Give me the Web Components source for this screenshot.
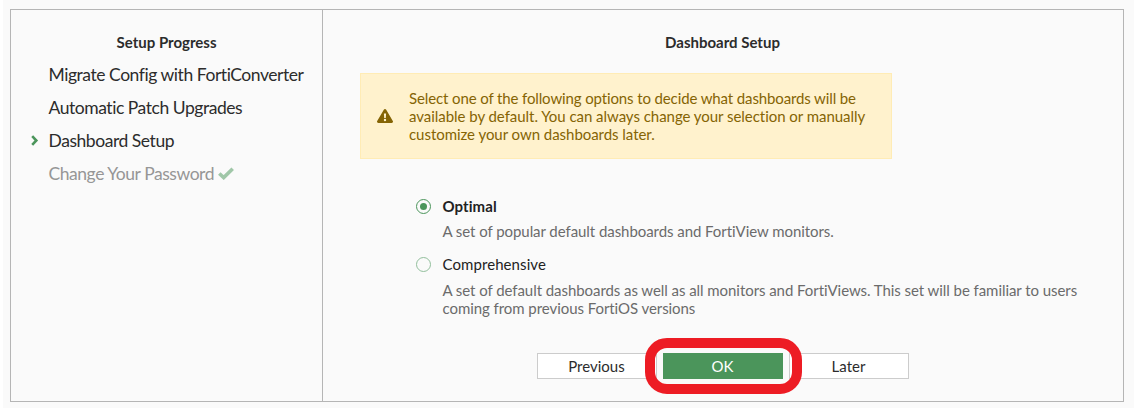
<!DOCTYPE html>
<html lang="en">
<head>
<meta charset="utf-8">
<title>Dashboard Setup</title>
<style>
html, body { margin: 0; height: 100%; background: #fff; }
body { font-family: Lato, "Open Sans", sans-serif; font-size: 15px; line-height: 18px; color: #2c2c2c; overflow: hidden; font-variant-ligatures: none; }
</style>
</head>
<body>
<setup-wizard></setup-wizard>
<script>
function define(name, html) {
  const template = document.createElement('template');
  template.innerHTML = html;
  customElements.define(name, class extends HTMLElement {
    constructor() {
      super();
      this.attachShadow({ mode: 'open' }).append(template.content.cloneNode(true));
    }
  });
}

define('progress-step', `
<style>
:host { display: grid; grid-template-columns: 20px auto 1fr; align-items: center; height: 33px; font-size: 17.5px; line-height: 33px; letter-spacing: -0.45px; white-space: nowrap; }
.arrow, .check { visibility: hidden; display: block; }
.arrow { margin: -1px 0 0 2px; }
.check { margin-left: 4px; margin-top: -1px; }
:host([current]) .arrow { visibility: visible; }
:host([done]) .check { visibility: visible; }
:host([done]) { color: #969696; }
</style>
<svg class="arrow" width="8" height="11" viewBox="0 0 8 11"><path d="M1.2 1.2 5.3 5.5 1.2 9.8" fill="none" stroke="#4b955b" stroke-width="2.6"/></svg>
<span><slot></slot></span>
<svg class="check" width="16" height="13" viewBox="0 0 16 13"><path d="M1.3 6.5 5.7 10.6 14.7 1.7" fill="none" stroke="#a0c7a8" stroke-width="3.6"/></svg>`);

define('progress-panel', `
<style>
:host { display: block; box-sizing: border-box; border-right: 1px solid #b5b5b5; padding-top: 23px; }
h2 { margin: 0 0 7px; font-size: 15px; line-height: 18px; text-align: center; }
.steps { padding-left: 17.5px; }
</style>
<h2>Setup Progress</h2>
<div class="steps"><slot></slot></div>`);

define('warning-banner', `
<style>
:host { box-sizing: border-box; display: flex; align-items: center; width: 532px; height: 86px; padding-left: 16px; border: 1px solid #ffecb5; background: #fff2cd; color: #856404; }
svg { flex: none; margin-right: 16px; }
p { margin: 0; width: 464px; letter-spacing: -0.04px; }
</style>
<svg width="16" height="14" viewBox="0 0 16 14"><path fill-rule="evenodd" fill="#856404" d="M6.8.7a1.4 1.4 0 0 1 2.4 0l6.6 11.2A1.4 1.4 0 0 1 14.6 14H1.4A1.4 1.4 0 0 1 .2 11.9ZM6.9 4.5 7.2 9h1.6l.3-4.5ZM8 9.8a1.2 1.2 0 1 0 0 2.4 1.2 1.2 0 0 0 0-2.4Z"/></svg>
<p><slot></slot></p>`);

define('radio-option', `
<style>
:host { display: grid; grid-template-columns: 15px 1fr; column-gap: 11.5px; row-gap: 7px; }
:host(:not([checked])) { row-gap: 8px; }
.dot { box-sizing: border-box; width: 15px; height: 15px; margin-top: 2px; border: 1px solid #92bf9c; border-radius: 50%; display: grid; place-items: center; }
.label { color: #222; letter-spacing: 0.08px; }
.text { grid-column: 2; color: #6b6b6b; letter-spacing: -0.06px; }
:host([checked]) .label { font-weight: 700; }
:host([checked]) .dot { border-color: #4b955b; }
:host([checked]) .dot::before { content: ""; width: 7px; height: 7px; border-radius: 50%; background: #4b955b; }
</style>
<span class="dot"></span>
<span class="label"><slot name="label"></slot></span>
<span class="text"><slot></slot></span>`);

define('action-button', `
<style>
:host { display: block; position: relative; width: 120px; height: 26px; }
:host([primary]) { z-index: 1; }
button { box-sizing: border-box; width: 100%; height: 100%; padding: 0 1px 0 0; border: 1px solid #ccc; background: #fff; font: inherit; color: #2c2c2c; display: grid; place-items: center; }
:host([primary]) button { background: #4b955b; border-color: #4b955b; color: #fff; position: relative; }
:host([primary])::before { content: ""; position: absolute; left: -18px; top: -15px; width: 137px; height: 36px; border: 10px solid #ed1c24; border-radius: 22px; }
</style>
<button><slot></slot></button>`);

define('dashboard-panel', `
<style>
:host { display: flex; flex-direction: column; padding-top: 23px; }
h2 { margin: 0 1px 0 0; font-size: 15px; line-height: 18px; text-align: center; }
warning-banner { margin: 22px 0 0 37px; }
.tight { letter-spacing: -0.12px; }
.options { display: grid; row-gap: 15px; margin: 38px 0 0 93px; width: 665px; }
.actions { display: flex; justify-content: center; gap: 6px; margin-top: 36px; }
</style>
<h2>Dashboard Setup</h2>
<warning-banner><span class="tight">Select one of the following options to decide what dashboards will be</span> available by default. You can always change your selection or manually customize your own dashboards later.</warning-banner>
<div class="options">
<radio-option checked><span slot="label">Optimal</span>A set of popular default dashboards and FortiView monitors.</radio-option>
<radio-option><span slot="label">Comprehensive</span>A set of default dashboards as well as all monitors and FortiViews. This set will be familiar to users coming from previous FortiOS versions</radio-option>
</div>
<div class="actions"><action-button>Previous</action-button><action-button primary>OK</action-button><action-button>Later</action-button></div>`);

define('setup-wizard', `
<style>
:host { display: block; box-sizing: border-box; margin-left: 3px; height: 408px; padding: 9px 10px 6px 7px; background: #fafafa; }
.frame { box-sizing: border-box; height: 393px; border: 1px solid #b5b5b5; display: grid; grid-template-columns: 312px 1fr; }
</style>
<div class="frame">
<progress-panel>
<progress-step>Migrate Config with FortiConverter</progress-step>
<progress-step>Automatic Patch Upgrades</progress-step>
<progress-step current>Dashboard Setup</progress-step>
<progress-step done>Change Your Password</progress-step>
</progress-panel>
<dashboard-panel></dashboard-panel>
</div>`);
</script>
</body>
</html>
